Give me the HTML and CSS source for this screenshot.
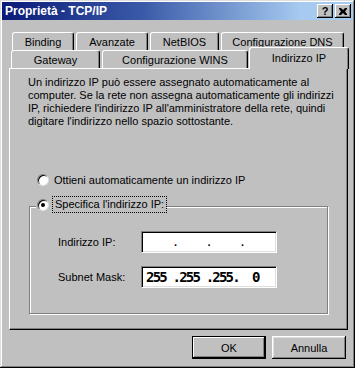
FILE: index.html
```html
<!DOCTYPE html>
<html lang="it">
<head>
    <meta charset="UTF-8">
    <title>Proprietà - TCP/IP</title>
    <link rel="stylesheet" href="styles.css">
</head>
<body>
    <div class="window">
        <div class="titlebar">
            <span class="title">Proprietà - TCP/IP</span>
            <span class="title-buttons">
                <span class="tbtn help">?</span>
                <span class="tbtn close">
                    <svg width="8" height="7" viewBox="0 0 8 7"><path d="M0 0h2l2 2 2-2h2v1L6 3.5 8 6v1H6L4 5 2 7H0V6l2-2.5L0 1z" fill="#000"/></svg>
                </span>
            </span>
        </div>

        <div class="tabs">
            <div class="tab-row back">
                <div class="tab" style="width:62px">Binding</div>
                <div class="tab" style="width:72px">Avanzate</div>
                <div class="tab" style="width:69px">NetBIOS</div>
                <div class="tab" style="width:123px">Configurazione DNS</div>
            </div>
            <div class="tab-row front">
                <div class="tab" style="width:89px">Gateway</div>
                <div class="tab" style="width:146px">Configurazione WINS</div>
                <div class="tab selected" style="width:100px">Indirizzo IP</div>
            </div>
        </div>

        <div class="panel">
            <p class="intro">
                Un indirizzo IP può essere assegnato automaticamente al<br>
                computer. Se la rete non assegna automaticamente gli indirizzi<br>
                IP, richiedere l'indirizzo IP all'amministratore della rete, quindi<br>
                digitare l'indirizzo nello spazio sottostante.
            </p>

            <div class="radio-line">
                <span class="radio"></span>
                <span>Ottieni automaticamente un indirizzo IP</span>
            </div>

            <fieldset class="group">
                <legend>
                    <span class="radio checked"></span>
                    <span class="focus">Specifica l'indirizzo IP:</span>
                </legend>
                <div class="field-row">
                    <span class="field-label">Indirizzo IP:</span>
                    <div class="ip-field">
                        <span class="octet"></span><span class="dot">.</span>
                        <span class="octet"></span><span class="dot">.</span>
                        <span class="octet"></span><span class="dot">.</span>
                        <span class="octet"></span>
                    </div>
                </div>
                <div class="field-row">
                    <span class="field-label">Subnet Mask:</span>
                    <div class="ip-field mask">255 .255 .255.  0</div>
                </div>
            </fieldset>
        </div>

        <div class="buttons">
            <button class="btn default">OK</button>
            <button class="btn">Annulla</button>
        </div>
    </div>
</body>
</html>
```

FILE: styles.css
```css
body {
    margin: 0;
    padding: 0;
    font-family: "Liberation Sans", Arial, sans-serif;
    font-size: 11px;
    color: #000;
    background-color: #c0c0c0;
}

.window {
    width: 355px;
    height: 368px;
    box-sizing: border-box;
    padding: 2px;
    background-color: #c0c0c0;
    box-shadow: inset -1px -1px #000, inset 1px 1px #dfdfdf, inset -2px -2px #808080, inset 2px 2px #fff;
}

/* Title bar */
.titlebar {
    height: 18px;
    display: flex;
    align-items: center;
    justify-content: space-between;
    background: linear-gradient(to right, #0a1a78 0%, #3a5aa8 40%, #a6caf0 85%, #a6caf0 100%);
}

.title {
    padding-left: 3px;
    color: #fff;
    font-weight: bold;
    font-size: 12px;
}

.title-buttons {
    display: flex;
    gap: 2px;
    padding-right: 2px;
}

.tbtn {
    width: 16px;
    height: 14px;
    box-sizing: border-box;
    display: flex;
    align-items: center;
    justify-content: center;
    background-color: #c0c0c0;
    box-shadow: inset -1px -1px #000, inset 1px 1px #fff, inset -2px -2px #808080;
    font-weight: bold;
    font-size: 11px;
    line-height: 14px;
}

/* Tabs */
.tabs {
    margin-top: 12px;
}

.tab-row {
    display: flex;
    align-items: flex-end;
    gap: 2px;
    height: 18px;
}

.tab-row.back {
    padding-left: 10px;
}

.tab-row.front {
    padding-left: 9px;
}

.tab {
    height: 18px;
    box-sizing: border-box;
    display: flex;
    align-items: center;
    justify-content: center;
    background-color: #c0c0c0;
    border-top: 1px solid #fff;
    border-left: 1px solid #fff;
    border-right: 1px solid #000;
    border-radius: 3px 3px 0 0;
    box-shadow: inset -1px 0 #808080;
}

.tab.selected {
    height: 22px;
    margin-left: -1px;
    margin-bottom: -1px;
    position: relative;
    z-index: 1;
    padding-bottom: 1px;
}

/* Panel */
.panel {
    width: 339px;
    height: 262px;
    box-sizing: border-box;
    margin-left: 7px;
    padding: 7px 0 0 18px;
    border-top: 1px solid #fff;
    border-left: 1px solid #fff;
    border-right: 1px solid #000;
    border-bottom: 1px solid #000;
    box-shadow: inset -1px -1px #808080;
}

.intro {
    margin: 0;
    line-height: 13px;
    white-space: nowrap;
}

.radio-line {
    display: flex;
    align-items: center;
    height: 14px;
    margin: 45px 0 0 9px;
}

.radio {
    width: 12px;
    height: 12px;
    box-sizing: border-box;
    margin-right: 5px;
    border-radius: 50%;
    background-color: #fff;
    border: 1px solid;
    border-color: #808080 #dfdfdf #dfdfdf #808080;
    box-shadow: inset 1px 1px #000;
    display: flex;
    align-items: center;
    justify-content: center;
}

.radio.checked::after {
    content: "";
    width: 4px;
    height: 4px;
    border-radius: 50%;
    background-color: #000;
}

/* Group box */
.group {
    width: 299px;
    box-sizing: border-box;
    margin: 10px 0 0 1px;
    padding: 0 0 25px 0;
    border: 1px solid #808080;
    box-shadow: 1px 1px 0 #fff, inset 1px 1px 0 #fff;
}

.group legend {
    display: flex;
    align-items: center;
    margin-left: 6px;
    padding: 0 1px 4px 1px;
    background-color: #c0c0c0;
}

.group legend .radio {
    margin-right: 4px;
}

.focus {
    padding: 1px 2px;
    line-height: 13px;
    outline: 1px dotted #000;
}

.field-row {
    display: flex;
    align-items: center;
    height: 22px;
    margin: 15px 0 0 28px;
}

.field-row + .field-row {
    margin-top: 13px;
}

.field-label {
    width: 83px;
}

.ip-field {
    width: 136px;
    height: 22px;
    box-sizing: border-box;
    display: flex;
    align-items: center;
    padding: 0 2px;
    background-color: #fff;
    border: 1px solid;
    border-color: #808080 #fff #fff #808080;
    box-shadow: inset 1px 1px #000, inset -1px -1px #dfdfdf;
}

.octet {
    width: 30px;
}

.dot {
    width: 4px;
    text-align: center;
    font-weight: bold;
}

.ip-field.mask {
    padding-left: 4px;
    white-space: pre;
    font-family: "DejaVu Sans Mono", monospace;
    font-weight: bold;
    font-size: 14px;
    letter-spacing: -1.8px;
}

/* Bottom buttons */
.buttons {
    display: flex;
    justify-content: flex-end;
    gap: 6px;
    margin-top: 6px;
    padding-right: 7px;
}

.btn {
    width: 74px;
    height: 23px;
    padding: 0;
    font-family: "Liberation Sans", Arial, sans-serif;
    font-size: 11px;
    color: #000;
    background-color: #c0c0c0;
    border: none;
    box-shadow: inset -1px -1px #000, inset 1px 1px #fff, inset -2px -2px #808080, inset 2px 2px #dfdfdf;
}

.btn.default {
    box-shadow: inset 0 0 0 1px #000, inset -2px -2px #000, inset 2px 2px #fff, inset -3px -3px #808080;
}
```
